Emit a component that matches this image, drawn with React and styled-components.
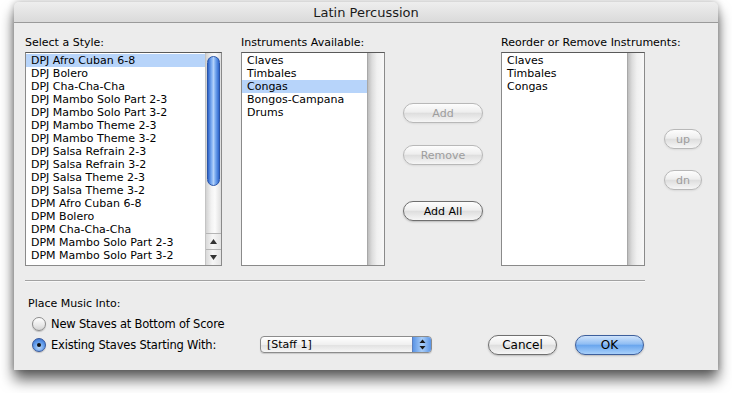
import React from "react";
import styled, { createGlobalStyle } from "styled-components";

const GlobalStyle = createGlobalStyle`
  html, body {
    margin: 0;
    padding: 0;
    background: #ffffff;
  }
  body {
    font-family: "DejaVu Sans", "Liberation Sans", sans-serif;
    font-size: 11px;
    color: #000;
  }
`;

const Page = styled.div`
  width: 732px;
  height: 393px;
  padding: 2px 0 0 14px;
  box-sizing: border-box;
  overflow: hidden;
`;

const Window = styled.div`
  width: 704px;
  height: 368px;
  display: flex;
  flex-direction: column;
  background: #ececec;
  border-radius: 5px 5px 0 0;
  box-shadow: 0 10px 14px rgba(0, 0, 0, 0.6), 0 0 7px rgba(0, 0, 0, 0.28);
`;

const TitleBar = styled.div`
  height: 20px;
  border-bottom: 1px solid #9a9a9a;
  border-radius: 5px 5px 0 0;
  background: linear-gradient(#eeeeee, #dadada);
  display: flex;
  align-items: center;
  justify-content: center;
  font-size: 13px;
  color: #1a1a1a;
`;

const Body = styled.div`
  flex: 1;
  padding: 13px 0 0 11px;
  display: flex;
  flex-direction: column;
`;

const Columns = styled.div`
  display: flex;
  align-items: flex-start;
`;

const Column = styled.div`
  display: flex;
  flex-direction: column;
  width: ${(p) => p.$w}px;
  margin-left: ${(p) => p.$ml || 0}px;
  padding-top: ${(p) => p.$pt || 0}px;
  align-items: ${(p) => (p.$center ? "center" : "stretch")};
`;

const Label = styled.div`
  height: 13px;
  line-height: 13px;
  margin-bottom: 3px;
  white-space: nowrap;
`;

const ListBox = styled.div`
  height: 214px;
  box-sizing: border-box;
  border: 1px solid #8a8a8a;
  border-top-color: #5a5a5a;
  background: #ffffff;
  display: flex;
`;

const Rows = styled.div`
  flex: 1;
  padding-top: 1px;
  overflow: hidden;
`;

const Row = styled.div`
  height: 13px;
  line-height: 13px;
  padding-left: 5px;
  white-space: nowrap;
  background: ${(p) => (p.$selected ? "#b7d4fa" : "transparent")};
`;

const Scroller = styled.div`
  width: 15px;
  display: flex;
  flex-direction: column;
  border-left: 1px solid #c4c4c4;
  background: linear-gradient(90deg, #d2d2d2, #f2f2f2 35%, #fbfbfb 60%, #dedede);
`;

const Thumb = styled.div`
  margin: 3px 1px 0;
  height: 128px;
  border-radius: 7px;
  border: 1px solid #2a55a8;
  background: linear-gradient(90deg, #2e63c8, #79aaf0 30%, #b2d1fa 50%, #6a9fec 72%, #2f66cc);
`;

const Track = styled.div`
  flex: 1;
`;

const Arrow = styled.div`
  height: 15px;
  border-top: 1px solid #b4b4b4;
  display: flex;
  align-items: center;
  justify-content: center;
  background: linear-gradient(90deg, #d9d9d9, #f6f6f6 45%, #e4e4e4);
`;

const EmptyTrack = styled.div`
  width: 16px;
  border-left: 1px solid #a8a8a8;
  background: linear-gradient(90deg, #bdbdbd, #dcdcdc 25%, #f0f0f0 55%, #f8f8f8);
`;

const AquaButton = styled.button`
  width: ${(p) => p.$w}px;
  height: 20px;
  margin-top: ${(p) => p.$mt || 0}px;
  margin-left: ${(p) => p.$ml || 0}px;
  padding: 0;
  box-sizing: border-box;
  border-radius: 10px;
  border: 1px solid ${(p) => (p.$disabled ? "#b8b8b8" : p.$primary ? "#3d5f9c" : "#6f6f6f")};
  background: ${(p) =>
    p.$primary
      ? "linear-gradient(#cfe3fb, #8fbdf3 45%, #6aa6ee 52%, #a8d0fa)"
      : "linear-gradient(#fdfdfd, #eeeeee 45%, #dedede 52%, #f6f6f6)"};
  box-shadow: 0 1px 2px rgba(0, 0, 0, ${(p) => (p.$disabled ? 0.08 : 0.22)});
  font-family: "DejaVu Sans", "Liberation Sans", sans-serif;
  font-size: ${(p) => p.$fs || 11}px;
  color: ${(p) => (p.$disabled ? "#9d9d9d" : "#000")};
  display: flex;
  align-items: center;
  justify-content: center;
`;

const Separator = styled.div`
  width: 620px;
  height: 1px;
  margin-top: 14px;
  background: #a2a2a2;
  border-bottom: 1px solid #f8f8f8;
`;

const Bottom = styled.div`
  display: flex;
  flex-direction: column;
  padding-top: 15px;
  padding-left: 3px;
`;

const OptionRow = styled.div`
  display: flex;
  align-items: center;
  height: 21px;
  padding-left: 4px;
`;

const Radio = styled.div`
  width: 14px;
  height: 14px;
  box-sizing: border-box;
  border-radius: 50%;
  border: 1px solid ${(p) => (p.$on ? "#36579a" : "#8c8c8c")};
  background: ${(p) =>
    p.$on
      ? "radial-gradient(circle at 50% 70%, #b6d6fb, #5d98e8 55%, #2f64c4)"
      : "linear-gradient(#ffffff, #e8e8e8 60%, #d4d4d4)"};
  box-shadow: 0 1px 1px rgba(0, 0, 0, 0.2);
  display: flex;
  align-items: center;
  justify-content: center;
  flex-shrink: 0;
  &::after {
    content: "";
    display: ${(p) => (p.$on ? "block" : "none")};
    width: 4px;
    height: 4px;
    border-radius: 50%;
    background: #111;
  }
`;

const OptionText = styled.div`
  margin-left: 5px;
  width: ${(p) => (p.$w ? `${p.$w}px` : "auto")};
  white-space: nowrap;
  font-size: 11.5px;
  letter-spacing: -0.2px;
`;

const Popup = styled.div`
  width: 172px;
  height: 17px;
  box-sizing: border-box;
  border: 1px solid #8c8c8c;
  border-radius: 4px;
  background: linear-gradient(#ffffff, #f0f0f0 50%, #e2e2e2 55%, #f6f6f6);
  display: flex;
  align-items: center;
  box-shadow: 0 1px 1px rgba(0, 0, 0, 0.15);
`;

const PopupText = styled.div`
  flex: 1;
  padding-left: 6px;
  font-size: 11px;
`;

const PopupArrows = styled.div`
  width: 18px;
  height: 15px;
  border-left: 1px solid #5b7fbf;
  border-radius: 0 3px 3px 0;
  background: linear-gradient(90deg, #5b95e6, #a8cdf8 50%, #5b95e6);
  display: flex;
  align-items: center;
  justify-content: center;
`;

const styles = [
  "DPJ Afro Cuban 6-8",
  "DPJ Bolero",
  "DPJ Cha-Cha-Cha",
  "DPJ Mambo Solo Part 2-3",
  "DPJ Mambo Solo Part 3-2",
  "DPJ Mambo Theme 2-3",
  "DPJ Mambo Theme 3-2",
  "DPJ Salsa Refrain 2-3",
  "DPJ Salsa Refrain 3-2",
  "DPJ Salsa Theme 2-3",
  "DPJ Salsa Theme 3-2",
  "DPM Afro Cuban 6-8",
  "DPM Bolero",
  "DPM Cha-Cha-Cha",
  "DPM Mambo Solo Part 2-3",
  "DPM Mambo Solo Part 3-2",
];

const available = ["Claves", "Timbales", "Congas", "Bongos-Campana", "Drums"];
const chosen = ["Claves", "Timbales", "Congas"];

const Triangle = ({ down }) => (
  <svg width="7" height="5" viewBox="0 0 7 5">
    <path d={down ? "M0 0 L7 0 L3.5 5 Z" : "M0 5 L7 5 L3.5 0 Z"} fill="#333" />
  </svg>
);

const App = () => {
  return (
    <Page>
      <GlobalStyle />
      <Window>
        <TitleBar>Latin Percussion</TitleBar>
        <Body>
          <Columns>
            <Column $w={197}>
              <Label>Select a Style:</Label>
              <ListBox>
                <Rows>
                  {styles.map((s, i) => (
                    <Row key={s} $selected={i === 0}>
                      {s}
                    </Row>
                  ))}
                </Rows>
                <Scroller>
                  <Thumb />
                  <Track />
                  <Arrow>
                    <Triangle />
                  </Arrow>
                  <Arrow>
                    <Triangle down />
                  </Arrow>
                </Scroller>
              </ListBox>
            </Column>

            <Column $w={144} $ml={19}>
              <Label>Instruments Available:</Label>
              <ListBox>
                <Rows>
                  {available.map((s) => (
                    <Row key={s} $selected={s === "Congas"}>
                      {s}
                    </Row>
                  ))}
                </Rows>
                <EmptyTrack />
              </ListBox>
            </Column>

            <Column $w={116} $pt={67} $center>
              <AquaButton $w={80} $disabled>Add</AquaButton>
              <AquaButton $w={80} $mt={22} $disabled>Remove</AquaButton>
              <AquaButton $w={80} $mt={36}>Add All</AquaButton>
            </Column>

            <Column $w={144}>
              <Label>Reorder or Remove Instruments:</Label>
              <ListBox>
                <Rows>
                  {chosen.map((s) => (
                    <Row key={s}>{s}</Row>
                  ))}
                </Rows>
                <EmptyTrack />
              </ListBox>
            </Column>

            <Column $w={38} $ml={19} $pt={93}>
              <AquaButton $w={38} $disabled>up</AquaButton>
              <AquaButton $w={38} $mt={21} $disabled>dn</AquaButton>
            </Column>
          </Columns>

          <Separator />

          <Bottom>
            <Label>Place Music Into:</Label>
            <OptionRow>
              <Radio />
              <OptionText>New Staves at Bottom of Score</OptionText>
            </OptionRow>
            <OptionRow>
              <Radio $on />
              <OptionText $w={209}>Existing Staves Starting With:</OptionText>
              <Popup>
                <PopupText>[Staff 1]</PopupText>
                <PopupArrows>
                  <svg width="7" height="11" viewBox="0 0 7 11">
                    <path d="M0.5 4 L6.5 4 L3.5 0.5 Z" fill="#1a1a1a" />
                    <path d="M0.5 7 L6.5 7 L3.5 10.5 Z" fill="#1a1a1a" />
                  </svg>
                </PopupArrows>
              </Popup>
              <AquaButton $w={69} $ml={56} $fs={12}>Cancel</AquaButton>
              <AquaButton $w={69} $ml={18} $fs={12} $primary>OK</AquaButton>
            </OptionRow>
          </Bottom>
        </Body>
      </Window>
    </Page>
  );
};

export default App;
